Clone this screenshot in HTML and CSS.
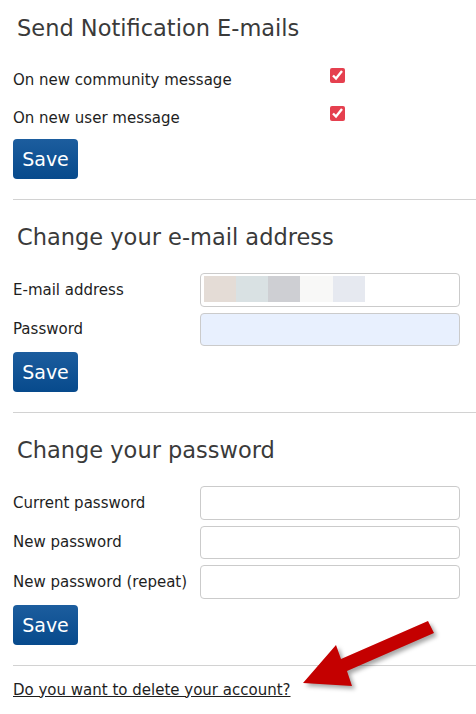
FILE: index.html
```html
<!DOCTYPE html>
<html lang="en">
<head>
    <meta charset="UTF-8">
    <meta name="viewport" content="width=device-width, initial-scale=1.0">
    <title>Account settings</title>
    <link rel="stylesheet" href="styles.css">
</head>
<body>
    <div class="page">
        <section class="block first">
            <h2>Send Notification E-mails</h2>
            <div class="check-row">
                <label for="n1">On new community message</label>
                <span class="check-cell"><input type="checkbox" id="n1" checked></span>
            </div>
            <div class="check-row">
                <label for="n2">On new user message</label>
                <span class="check-cell"><input type="checkbox" id="n2" checked></span>
            </div>
            <button class="btn">Save</button>
        </section>
        <hr>

        <section class="block">
            <h2>Change your e-mail address</h2>
            <div class="row">
                <label for="email">E-mail address</label>
                <input type="text" id="email" class="redacted">
            </div>
            <div class="row">
                <label for="pw">Password</label>
                <input type="password" id="pw" class="autofill">
            </div>
            <button class="btn">Save</button>
        </section>
        <hr>

        <section class="block">
            <h2>Change your password</h2>
            <div class="row">
                <label for="cur">Current password</label>
                <input type="password" id="cur">
            </div>
            <div class="row">
                <label for="new1">New password</label>
                <input type="password" id="new1">
            </div>
            <div class="row">
                <label for="new2">New password (repeat)</label>
                <input type="password" id="new2">
            </div>
            <button class="btn">Save</button>
        </section>
        <hr>

        <p class="delete"><a href="#">Do you want to delete your account?</a></p>

        <!-- annotation arrow -->
        <svg class="arrow" width="476" height="714" viewBox="0 0 476 714">
            <polygon points="303,683 336,645 341,659 428,621 434,633 347,671 352,686" fill="#c40000"/>
        </svg>
    </div>
</body>
</html>
```

FILE: styles.css
```css
body {
    margin: 0;
    font-family: "DejaVu Sans", sans-serif;
    color: #1e1e1e;
    background: #fff;
}
.page {
    position: relative;
    padding-left: 13px;
    height: 714px;
    overflow: hidden;
}
h2 {
    font-size: 22.5px;
    font-weight: normal;
    line-height: 28px;
    color: #3a3a3a;
    margin: 23px 0 22px;
    padding-left: 4px;
}
.first h2 { margin: 14px 0 21px; }
label {
    font-size: 15px;
    line-height: 20px;
}
.check-row {
    display: flex;
    height: 38px;
}
.check-row label {
    width: 317px;
    padding-top: 7px;
}
.check-cell input {
    margin: 5px 0 0;
    width: 15px;
    height: 15px;
    accent-color: #e5404f;
}
.row {
    display: flex;
    align-items: center;
    margin-bottom: 6px;
}
.row label { width: 187px; }
.row input {
    width: 260px;
    height: 33.5px;
    box-sizing: border-box;
    border: 1px solid #cbcbcb;
    border-radius: 4px;
    margin: 0;
    padding: 0 8px;
    background: #fff;
}
.row input.autofill { background: #e8f0fe; }
.row input.redacted {
    background: #fff linear-gradient(to right,
        #e4dcd6 0 32px, #d9e1e3 32px 64px, #cecfd3 64px 96px,
        #f8f8f7 96px 129px, #e6e9f0 129px 161px) no-repeat 3px 2px / 161px 26px;
}
.btn {
    display: block;
    width: 65px;
    height: 40px;
    padding: 0;
    border: none;
    border-radius: 4px;
    background: linear-gradient(#1c5d9e, #074a8c);
    color: #fff;
    font-family: "DejaVu Sans", sans-serif;
    font-size: 19px;
}
hr {
    margin: 20px 0 0;
    border: none;
    border-top: 1px solid #d2d2d2;
}
.delete {
    margin: 14px 0 0;
    font-size: 15px;
    line-height: 20px;
}
.delete a { color: #1e1e1e; }
.arrow {
    position: absolute;
    left: 0;
    top: 0;
    pointer-events: none;
    filter: drop-shadow(3px 3px 2px rgba(0, 0, 0, 0.35));
}
```
